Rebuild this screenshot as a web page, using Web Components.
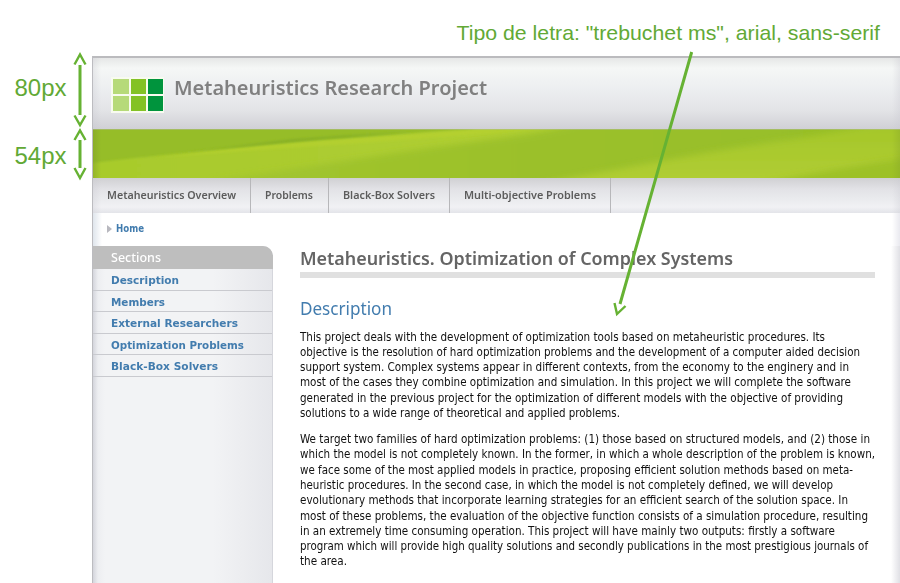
<!DOCTYPE html>
<html lang="en"><head><meta charset="utf-8"><title>Metaheuristics Research Project</title>
<style>html,body{margin:0;background:#fff}body{width:900px;height:583px;overflow:hidden;position:relative;font-family:"DejaVu Sans",sans-serif}</style></head>
<body>
<project-page></project-page>
<measure-notes></measure-notes>
<script>
// A single line of text whose width is scaled to a given measure.
class FitLine extends HTMLElement{
 connectedCallback(){
  const r=this.attachShadow({mode:'open'});
  r.innerHTML='<style>:host{display:block;white-space:nowrap}span{display:inline-block;transform-origin:0 50%}</style><span></span>';
  const s=r.querySelector('span');s.textContent=this.getAttribute('text');
  const target=+this.getAttribute('measure');
  const w=s.getBoundingClientRect().width;
  if(target&&w)s.style.transform='scaleX('+target/w+')';
 }
}
customElements.define('fit-line',FitLine);

class SiteHeader extends HTMLElement{
 connectedCallback(){
  this.attachShadow({mode:'open'}).innerHTML=`<style>
  :host{display:flex;height:73px;box-sizing:border-box;padding:19px 0 0 18px;border-top:2px solid #bbbbbe;
   background:linear-gradient(90deg,#c8c8d055,#c8c8d000 8px,#c8c8d000 799px,#c8c8d055),linear-gradient(#e6e7e7,#f5f7f6 10px,#eceef0 32px,#e3e4e7 52px,#d0d0d5)}
  svg{display:block;flex:none}
  fit-line{font:600 19px/24px "Noto Sans",sans-serif;color:#808080;margin:-1px 0 0 10px}
  </style>
  <svg width="53" height="36" viewBox="0 0 53 36"><path fill="#f8fbef" d="M0 0h53v36H0z"/>
  <path fill="#b6da79" d="M2 2h16v15H2zM2 19h16v15H2z"/><path fill="#83c225" d="M20 2h15v15H20zM20 19h15v15H20z"/><path fill="#00943d" d="M37 2h15v15H37zM37 19h15v15H37z"/></svg>
  <fit-line measure="313" text="Metaheuristics Research Project"></fit-line>`;
 }
}
customElements.define('site-header',SiteHeader);

class GreenBanner extends HTMLElement{
 connectedCallback(){
  this.attachShadow({mode:'open'}).innerHTML=`<style>:host{display:block;height:49px}svg{display:block}</style>
  <svg width="807" height="49" viewBox="0 0 807 49"><defs>
  <linearGradient id="b" gradientUnits="userSpaceOnUse" x1="0" x2="480" y1="0" y2="0"><stop stop-color="#a8cb2c"/><stop offset=".5" stop-color="#accc30"/><stop offset="1" stop-color="#b2d030"/></linearGradient>
  <linearGradient id="d" x2="1"><stop stop-color="#8db626" stop-opacity="0"/><stop offset=".4" stop-color="#88b026"/><stop offset=".7" stop-color="#86b026"/><stop offset="1" stop-color="#8db626" stop-opacity="0"/></linearGradient>
  <linearGradient id="e" x2="0" y2="1"><stop stop-color="#a3c629"/><stop offset="1" stop-color="#b2ce34"/></linearGradient>
  <linearGradient id="m" gradientUnits="userSpaceOnUse" x1="130" x2="807" y1="0" y2="0"><stop stop-color="#a2c52e"/><stop offset=".4" stop-color="#9cc12b"/><stop offset="1" stop-color="#96be28"/></linearGradient>
  <linearGradient id="s"><stop stop-color="#809e2a" stop-opacity=".5"/><stop offset=".01" stop-color="#809e2a" stop-opacity="0"/><stop offset=".99" stop-color="#809e2a" stop-opacity="0"/><stop offset="1" stop-color="#809e2a" stop-opacity=".3"/></linearGradient>
  <filter id="f" x="-5%" y="-30%" width="110%" height="160%"><feGaussianBlur stdDeviation="3"/></filter>
  <filter id="g" x="-5%" y="-20%" width="110%" height="140%"><feGaussianBlur stdDeviation=".9"/></filter></defs>
  <path fill="#96bd28" d="M0 0h807v49H0z"/>
  <path fill="url(#b)" filter="url(#g)" d="M-10 35Q40 29 100 23T230 11T380 0L400-10H560V60H-10z"/>
  <path fill="#b8d22e" opacity=".6" filter="url(#g)" d="M60 29Q150 18 230 12T380 1H440Q300 12 210 18T60 29z"/>
  <path fill="url(#d)" filter="url(#g)" d="M40 30Q130 19 230 10L340 3L300 3L200 10Q130 18 40 30z"/>
  <path fill="url(#m)" filter="url(#f)" d="M120 52Q200 40 270 29T400 10T500-10H830V60H120z"/>
  <path fill="url(#e)" filter="url(#f)" d="M440 56Q530 39 590 28T700 10T800-10H830V60z"/>
  <path fill="#9dc128" filter="url(#f)" d="M660 56Q740 40 820 28V60z"/>
  <path fill="url(#s)" d="M0 0h807v49H0z"/><path fill="#b1bc9a" d="M0 0h807v.6H0z"/></svg>`;
 }
}
customElements.define('green-banner',GreenBanner);

class NavTab extends HTMLElement{
 connectedCallback(){
  this.attachShadow({mode:'open'}).innerHTML=`<style>
  :host{display:block;box-sizing:border-box;height:35px;padding:7px 0 0 14px;border-right:1px solid #b7b7ba;width:${this.getAttribute('width')}px}
  fit-line{font:600 11.5px/19px "Noto Sans",sans-serif;color:#5c5c5c}</style>
  <fit-line measure="${this.getAttribute('measure')}" text="${this.getAttribute('label')}"></fit-line>`;
 }
}
customElements.define('nav-tab',NavTab);

class NavBar extends HTMLElement{
 connectedCallback(){
  this.attachShadow({mode:'open'}).innerHTML=`<style>
  :host{display:flex;height:35px;background:linear-gradient(90deg,#c8c8d050,#c8c8d000 8px,#c8c8d000 799px,#c8c8d050),linear-gradient(#d0d0d3,#e2e2e6 11px,#e9eaed 20px,#f1f1f4 29px,#e3e4e9)}</style>
  <nav-tab width="158" measure="129" label="Metaheuristics Overview"></nav-tab><nav-tab width="78" measure="48" label="Problems"></nav-tab><nav-tab width="121" measure="92" label="Black-Box Solvers"></nav-tab><nav-tab width="161" measure="132" label="Multi-objective Problems"></nav-tab>`;
 }
}
customElements.define('nav-bar',NavBar);

class BreadCrumb extends HTMLElement{
 connectedCallback(){
  this.attachShadow({mode:'open'}).innerHTML=`<style>
  :host{display:flex;height:33px;box-sizing:border-box;padding:8px 0 0 14px;gap:4px;background:linear-gradient(90deg,#dfe5ec,#fff 9px,#fff 799px,#e9e9ef)}
  svg{margin-top:4px}fit-line{font:700 10px/15px "DejaVu Sans",sans-serif;color:#427cae}</style>
  <svg width="5" height="8"><path d="M0 0L5 4L0 8z" fill="#b8b8bf"/></svg><fit-line measure="28" text="Home"></fit-line>`;
 }
}
customElements.define('bread-crumb',BreadCrumb);

class SideMenu extends HTMLElement{
 connectedCallback(){
  const items=[['Description',68],['Members',54],['External Researchers',127],['Optimization Problems',133],['Black-Box Solvers',107]];
  this.attachShadow({mode:'open'}).innerHTML=`<style>
  :host{display:block;width:180px;flex:none;box-sizing:border-box;border-right:1px solid #d5d6dc;border-top-right-radius:11px;background:linear-gradient(90deg,#d4d5dc,#edeef1 5px,#f2f3f5 12px,#f2f3f5 120px,#e6e7eb)}
  .head{height:23px;width:180px;box-sizing:border-box;background:#bebebe;border-top-right-radius:10px;padding:1px 0 0 18px;color:#fff;font:500 13.3px/21px "Noto Sans",sans-serif}
  .item{height:21.6px;box-sizing:border-box;border-bottom:1px solid #c9cacf;padding-left:18px;color:#427cae;font:700 11.3px/23.6px "DejaVu Sans",sans-serif}
  </style><div class="head"><fit-line measure="50" text="Sections"></fit-line></div>
  ${items.map(([t,w])=>`<div class="item"><fit-line measure="${w}" text="${t}"></fit-line></div>`).join('')}`;
 }
}
customElements.define('side-menu',SideMenu);

class ProjectArticle extends HTMLElement{
 connectedCallback(){
  const p1=[["This project deals with the development of optimization tools based on metaheuristic procedures. Its",525],["objective is the resolution of hard optimization problems and the development of a computer aided decision",560],["support system. Complex systems appear in different contexts, from the economy to the enginery and in",549],["most of the cases they combine optimization and simulation. In this project we will complete the software",551],["generated in the previous project for the optimization of different models with the objective of providing",543],["solutions to a wide range of theoretical and applied problems.",320]];
  const p2=[["We target two families of hard optimization problems: (1) those based on structured models, and (2) those in",570],["which the model is not completely known. In the former, in which a whole description of the problem is known,",575],["we face some of the most applied models in practice, proposing efficient solution methods based on meta-",553],["heuristic procedures. In the second case, in which the model is not completely defined, we will develop",533],["evolutionary methods that incorporate learning strategies for an efficient search of the solution space. In",548],["most of these problems, the evaluation of the objective function consists of a simulation procedure, resulting",568],["in an extremely time consuming operation. This project will have mainly two outputs: firstly a software",535],["program which will provide high quality solutions and secondly publications in the most prestigious journals of",568],["the area.",47]];
  const lines=p=>p.map(([t,w])=>`<fit-line measure="${w}" text="${t}"></fit-line>`).join('');
  this.attachShadow({mode:'open'}).innerHTML=`<style>
  :host{display:block;flex:1;padding-left:27px;background:linear-gradient(90deg,#fff 618px,#e0e0e5)}
  .h1{font:600 18px/24px "Noto Sans",sans-serif;color:#656565;padding-bottom:2px;border-bottom:6px solid #e0e0e0;width:575px}
  .h2{font:400 18.3px/25px "Noto Sans",sans-serif;color:#427cae;margin:17px 0 9.6px}
  .p{font:11.6px/15.3px "DejaVu Sans Condensed","DejaVu Sans",sans-serif;font-stretch:condensed;color:#101010;margin-bottom:10.7px}
  </style><div class="h1"><fit-line measure="433" text="Metaheuristics. Optimization of Complex Systems"></fit-line></div>
  <div class="h2"><fit-line measure="92" text="Description"></fit-line></div>
  <div class="p">${lines(p1)}</div><div class="p">${lines(p2)}</div>`;
 }
}
customElements.define('project-article',ProjectArticle);

class ProjectPage extends HTMLElement{
 connectedCallback(){
  this.attachShadow({mode:'open'}).innerHTML=`<style>
  :host{display:flex;flex-direction:column;box-sizing:border-box;height:583px;padding:56px 0 0 92px;overflow:hidden}
  main{border-left:1px solid #bcbcc0;display:flex;flex-direction:column;flex:1;min-height:0}
  site-header,green-banner,nav-bar,bread-crumb{flex:none}
  .body{display:flex;flex:1;min-height:0}</style>
  <main><site-header></site-header><green-banner></green-banner><nav-bar></nav-bar><bread-crumb></bread-crumb>
  <div class="body"><side-menu></side-menu><project-article></project-article></div></main>`;
 }
}
customElements.define('project-page',ProjectPage);

// Annotation overlay: dimensions and typeface callout.
class MeasureNotes extends HTMLElement{
 connectedCallback(){
  this.attachShadow({mode:'open'}).innerHTML=`<style>
  :host{position:absolute;inset:0;pointer-events:none}svg{display:block}
  text{font-family:"Liberation Sans",Arial,sans-serif;fill:#62a935}</style>
  <svg width="900" height="583" viewBox="0 0 900 583">
  <text x="14.5" y="96" font-size="23" textLength="52" lengthAdjust="spacingAndGlyphs">80px</text>
  <text x="14.5" y="164" font-size="23" textLength="52" lengthAdjust="spacingAndGlyphs">54px</text>
  <text x="456.5" y="40" font-size="21" textLength="423.5" lengthAdjust="spacingAndGlyphs">Tipo de letra: "trebuchet ms", arial, sans-serif</text>
  <g fill="none" stroke="#66b233" stroke-width="2.4">
  <path stroke-width="3" d="M80 65V115M80 140V168M691.7 52L620 304"/>
  <path d="M74.5 64.5L80 54.5L85.5 64.5M74.5 115.5L80 125L85.5 115.5M74.5 140L80 130.5L85.5 140M74.5 168L80 178L85.5 168M614.5 303L617 314L625.5 306"/></g></svg>`;
 }
}
customElements.define('measure-notes',MeasureNotes);
</script></body></html>
